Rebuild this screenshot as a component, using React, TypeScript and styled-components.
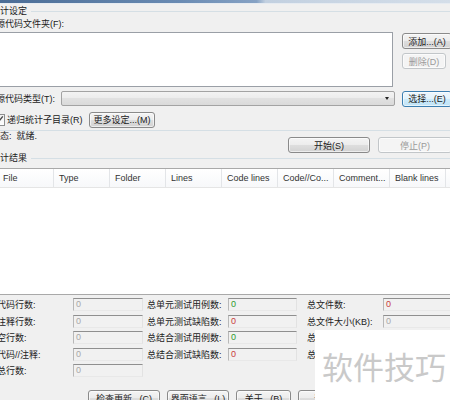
import styled, { createGlobalStyle } from "styled-components";

const GlobalStyle = createGlobalStyle`
  html, body {
    margin: 0;
    padding: 0;
    background: #f0f0f0;
  }
  body {
    font-family: "Liberation Sans", "Noto Sans CJK SC", sans-serif;
    font-size: 9px;
    color: #222;
  }
`;

const Page = styled.div`
  position: relative;
  width: 450px;
  height: 400px;
  overflow: hidden;
  background: #f0f0f0;
`;

const TitleStrip = styled.div`
  height: 3px;
  background: linear-gradient(
    to right,
    #4b6d96 0%,
    #6a8bb3 40%,
    #86a2c4 57%,
    #c2d0e0 59%,
    #d4dee9 100%
  );
  border-bottom: 1px solid #e6ebf1;
`;

const GroupHeader = styled.div<{ $top: number }>`
  display: flex;
  align-items: center;
  gap: 4px;
  height: 11px;
  line-height: 11px;
  margin-top: ${(p) => p.$top}px;
  margin-left: -9px;
  white-space: nowrap;

  &::after {
    content: "";
    flex: 1;
    border-top: 1px solid #d5dfe5;
  }
`;

const GroupBottom = styled.div`
  margin-top: 2px;
  border-top: 1px solid #d5dfe5;
`;

const FieldLabel = styled.div`
  margin-top: 2px;
  margin-left: -4px;
  height: 11px;
  line-height: 11px;
  white-space: nowrap;
`;

const FolderRow = styled.div`
  display: flex;
  gap: 9px;
  margin-top: 2px;
  margin-left: -10px;
  margin-right: -2px;
`;

const ListBox = styled.div`
  flex: 1;
  height: 55px;
  box-sizing: border-box;
  background: #fff;
  border: 1px solid #9a9fa6;
`;

const ButtonColumn = styled.div`
  display: flex;
  flex-direction: column;
  gap: 4px;
  width: 50px;
  padding-top: 1px;
`;

type Variant = "normal" | "focus" | "disabled";

const Button = styled.div<{ $variant?: Variant; $w?: number }>`
  display: flex;
  align-items: center;
  justify-content: center;
  flex: none;
  width: ${(p) => (p.$w ? `${p.$w}px` : "auto")};
  height: 16px;
  box-sizing: border-box;
  border-radius: 3px;
  white-space: nowrap;
  border: 1px solid
    ${(p) =>
      p.$variant === "focus"
        ? "#3c7fb1"
        : p.$variant === "disabled"
        ? "#c2c6c9"
        : "#8a8a8a"};
  color: ${(p) => (p.$variant === "disabled" ? "#9a9a9a" : "#222")};
  background: ${(p) =>
    p.$variant === "focus"
      ? "linear-gradient(#eef7fd 0%, #e2f3fc 50%, #cdebfb 50%, #bfe3f6 100%)"
      : p.$variant === "disabled"
      ? "#f4f4f4"
      : "linear-gradient(#f4f4f4 0%, #ececec 50%, #dedede 50%, #d2d2d2 100%)"};
  box-shadow: inset 0 0 0 1px rgba(255, 255, 255, 0.6);
`;

const TypeRow = styled.div`
  display: flex;
  align-items: center;
  height: 17px;
  margin-top: 3px;
  margin-right: -2px;
`;

const TypeLabel = styled.div`
  flex: none;
  width: 61px;
  margin-left: -4px;
  white-space: nowrap;
`;

const Combo = styled.div`
  position: relative;
  flex: 1;
  height: 15px;
  margin-left: 4px;
  margin-right: 7px;
  box-sizing: border-box;
  border: 1px solid #a3a3a3;
  border-radius: 2px;
  background: linear-gradient(#f3f3f3 0%, #ececec 50%, #e1e1e1 50%, #dadada 100%);

  &::after {
    content: "";
    position: absolute;
    right: 5px;
    top: 5px;
    border-left: 2.5px solid transparent;
    border-right: 2.5px solid transparent;
    border-top: 3px solid #222;
  }
`;

const CheckRow = styled.div`
  display: flex;
  align-items: center;
  height: 17px;
  margin-top: 4px;
`;

const CheckBox = styled.div`
  flex: none;
  width: 12px;
  height: 12px;
  margin-left: -7px;
  box-sizing: border-box;
  border: 1px solid #8e8f8f;
  background: linear-gradient(#f0f0f0, #fff);
  display: flex;
  align-items: center;
  justify-content: center;
`;

const CheckLabel = styled.div`
  flex: none;
  width: 82px;
  margin-left: 2px;
  white-space: nowrap;
`;

const StatusRow = styled.div`
  display: flex;
  align-items: flex-start;
  height: 22px;
  margin-right: -2px;
`;

const StatusText = styled.div`
  margin-left: -9px;
  line-height: 11px;
  white-space: nowrap;
`;

const StatusButtons = styled.div`
  display: flex;
  gap: 8px;
  margin-left: auto;
  margin-top: 6px;
`;

const Table = styled.div`
  margin-top: 4px;
  margin-left: -2px;
  width: 456px;
  height: 127px;
  box-sizing: border-box;
  background: #fff;
  border-top: 1px solid #a9a9a9;
  border-bottom: 1px solid #a9a9a9;
`;

const HeaderRow = styled.div`
  display: grid;
  grid-template-columns: repeat(8, 56px);
  height: 18px;
  border-bottom: 1px solid #e5e5e5;
  background: linear-gradient(#ffffff, #f7f8fa);
`;

const HeaderCell = styled.div`
  display: flex;
  align-items: center;
  padding-left: 5px;
  border-right: 1px solid #e3e5e8;
  white-space: nowrap;
  overflow: hidden;
  color: #333;
`;

const StatsGrid = styled.div`
  display: grid;
  grid-template-columns: 76px 74px 81px 79px 76px 70px;
  grid-auto-rows: 13px;
  row-gap: 3.5px;
  margin-top: 3px;
  margin-left: -3px;
`;

const StatLabel = styled.div`
  display: flex;
  align-items: center;
  white-space: nowrap;
`;

const ValueBox = styled.div<{ $color: string; $w?: number }>`
  width: ${(p) => p.$w ?? 70}px;
  height: 13px;
  box-sizing: border-box;
  padding-left: 2px;
  line-height: 11px;
  background: #f1f1f1;
  border-top: 1px solid #8f8f8f;
  border-left: 1px solid #b8b8b8;
  border-right: 1px solid #e2e2e2;
  border-bottom: 1px solid #e8e8e8;
  color: ${(p) => p.$color};
`;

const BottomButtons = styled.div`
  display: flex;
  gap: 7px;
  margin-top: 13px;
  margin-left: 88px;
`;

const Watermark = styled.div`
  position: absolute;
  left: 315px;
  top: 330px;
  width: 135px;
  height: 70px;
  box-sizing: border-box;
  padding: 20px 0 0 7px;
  background: #fff;
  font-family: "Noto Sans CJK SC", sans-serif;
  font-size: 31px;
  line-height: 31px;
  color: #c9c9c9;
  white-space: nowrap;
`;

const GREY = "#a8a8a8";
const GREEN = "#2f9a2f";
const RED = "#c83c3c";

const columns = [
  "File",
  "Type",
  "Folder",
  "Lines",
  "Code lines",
  "Code//Co...",
  "Comment...",
  "Blank lines",
];

// color null = label only (box hidden under the watermark)
type Stat = { label: string; color: string | null };

const statRows: (Stat | null)[][] = [
  [
    { label: "代码行数:", color: GREY },
    { label: "总单元测试用例数:", color: GREEN },
    { label: "总文件数:", color: RED },
  ],
  [
    { label: "注释行数:", color: GREY },
    { label: "总单元测试缺陷数:", color: RED },
    { label: "总文件大小(KB):", color: GREY },
  ],
  [
    { label: "空行数:", color: GREY },
    { label: "总结合测试用例数:", color: GREEN },
    { label: "总", color: null },
  ],
  [
    { label: "代码//注释:", color: GREY },
    { label: "总结合测试缺陷数:", color: RED },
    { label: "总", color: null },
  ],
  [{ label: "总行数:", color: GREY }, null, null],
];

function App() {
  return (
    <>
      <GlobalStyle />
      <Page>
        <TitleStrip />

        <GroupHeader $top={2}>统计设定</GroupHeader>
        <FieldLabel>源代码文件夹(F):</FieldLabel>
        <FolderRow>
          <ListBox />
          <ButtonColumn>
            <Button>添加...(A)</Button>
            <Button $variant="disabled" $w={44}>
              删除(D)
            </Button>
          </ButtonColumn>
        </FolderRow>

        <TypeRow>
          <TypeLabel>源代码类型(T):</TypeLabel>
          <Combo />
          <Button $variant="focus" $w={50}>
            选择...(E)
          </Button>
        </TypeRow>

        <CheckRow>
          <CheckBox>
            <svg width="9" height="9" viewBox="0 0 9 9">
              <path
                d="M1.2 4.6 L3.4 7 L7.8 1.4"
                fill="none"
                stroke="#4a4a4a"
                strokeWidth="1.4"
              />
            </svg>
          </CheckBox>
          <CheckLabel>递归统计子目录(R)</CheckLabel>
          <Button $w={66}>更多设定...(M)</Button>
        </CheckRow>
        <GroupBottom />

        <StatusRow>
          <StatusText>状态:&nbsp;&nbsp;就绪.</StatusText>
          <StatusButtons>
            <Button $w={82}>开始(S)</Button>
            <Button $variant="disabled" $w={74}>
              停止(P)
            </Button>
          </StatusButtons>
        </StatusRow>

        <GroupHeader $top={0}>统计结果</GroupHeader>
        <Table>
          <HeaderRow>
            {columns.map((c) => (
              <HeaderCell key={c}>{c}</HeaderCell>
            ))}
          </HeaderRow>
        </Table>

        <StatsGrid>
          {statRows.map((row, r) =>
            row.map((cell, c) => [
              <StatLabel key={`l${r}-${c}`}>{cell ? cell.label : null}</StatLabel>,
              <div key={`v${r}-${c}`}>
                {cell && cell.color && (
                  <ValueBox $color={cell.color} $w={c === 1 ? 69 : 70}>
                    0
                  </ValueBox>
                )}
              </div>,
            ])
          )}
        </StatsGrid>

        <BottomButtons>
          <Button $w={72}>检查更新...(C)</Button>
          <Button $w={62}>界面语言...(L)</Button>
          <Button $w={55}>关于...(B)</Button>
          <Button $w={62}>退出(X)</Button>
        </BottomButtons>

        <Watermark>软件技巧</Watermark>
      </Page>
    </>
  );
}

export default App;
